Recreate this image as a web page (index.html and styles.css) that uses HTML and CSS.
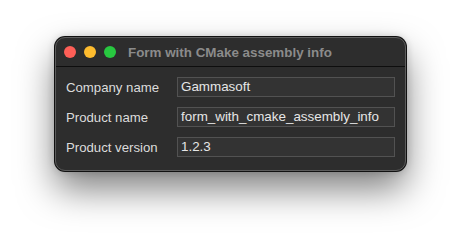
FILE: index.html
```html
<!DOCTYPE html>
<html lang="en">
<head>
    <meta charset="UTF-8">
    <title>Form with CMake assembly info</title>
    <link rel="stylesheet" href="styles.css">
</head>
<body>
    <div class="window">
        <div class="titlebar">
            <div class="lights">
                <span class="light red"></span>
                <span class="light yellow"></span>
                <span class="light green"></span>
            </div>
            <div class="title">Form with CMake assembly info</div>
        </div>
        <div class="form">
            <div class="row">
                <label>Company name</label>
                <div class="field">Gammasoft</div>
            </div>
            <div class="row">
                <label>Product name</label>
                <div class="field">form_with_cmake_assembly_info</div>
            </div>
            <div class="row">
                <label>Product version</label>
                <div class="field">1.2.3</div>
            </div>
        </div>
    </div>
</body>
</html>
```

FILE: styles.css
```css
*{
    margin:0;
    padding:0;
    box-sizing:border-box;
}
html,body{
    height:100%;
}
body{
    background:#ffffff;
    font-family:"Liberation Sans", Arial, sans-serif;
    padding:37px 0 0 55px;
    overflow:hidden;
}
.window{
    width:351px;
    height:134px;
    background:#2d2d2d;
    border:1px solid #5c5c5c;
    border-radius:10px;
    box-shadow:0 0 0 1px #111111, 0 0 8px rgba(0,0,0,0.2), 0 18px 36px rgba(0,0,0,0.5);
    overflow:hidden;
}
.titlebar{
    height:29px;
    display:flex;
    align-items:center;
    border-bottom:1px solid #0e0e0e;
    padding-left:8px;
}
.lights{
    display:flex;
    gap:8px;
}
.light{
    width:12px;
    height:12px;
    border-radius:50%;
}
.red{ background:#fe5f57; }
.yellow{ background:#febc2e; }
.green{ background:#28c840; }
.title{
    margin-left:12px;
    color:#8b8b8b;
    font-weight:bold;
    font-size:13.4px;
}
.form{
    padding:10px 10px 0 10px;
    display:flex;
    flex-direction:column;
    gap:10px;
}
.row{
    display:flex;
    align-items:center;
    height:20px;
}
.row label{
    width:111px;
    color:#dcdcdc;
    font-size:13.2px;
}
.field{
    width:218px;
    height:20px;
    background:#333333;
    border:1px solid #525252;
    color:#e6e6e6;
    font-size:13.4px;
    line-height:18px;
    padding-left:3px;
}
```
